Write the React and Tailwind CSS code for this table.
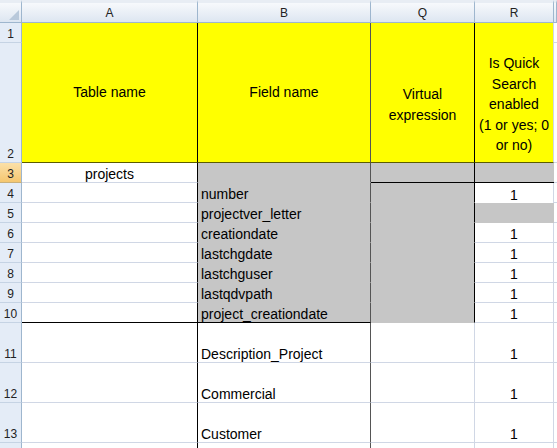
import React from "react";

const fields = [
  ["number", "1", false],
  ["projectver_letter", "", true],
  ["creationdate", "1", false],
  ["lastchgdate", "1", false],
  ["lastchguser", "1", false],
  ["lastqdvpath", "1", false],
  ["project_creationdate", "1", false],
];

const big = ["Description_Project", "Commercial", "Customer"];

function RowHead({ n, active }) {
  return (
    <div
      className={
        active
          ? "flex items-end justify-center text-[12px] leading-[14px] pb-[1px] text-[#222] bg-linear-to-b from-[#fbe0a8] to-[#f5c76f] border-r border-b border-r-[#9eb6ce] border-b-[#c9b07a]"
          : "flex items-end justify-center text-[12px] leading-[14px] pb-[1px] text-[#222] bg-[#e4ecf7] border-r border-b border-r-[#9eb6ce] border-b-[#c5d3e4]"
      }
    >
      {n}
    </div>
  );
}

function ColHead({ children }) {
  return (
    <div className="flex items-center justify-center text-[12px] text-[#222] bg-linear-to-b from-[#f7f9fc] to-[#dde6f1] border-r border-b border-[#9eb6ce] border-t-[3px] border-t-[#e8edf4]">
      {children}
    </div>
  );
}

export default function App() {
  return (
    <div className="w-[557px] h-[448px] overflow-hidden bg-white font-['Liberation_Sans',Arial,sans-serif] text-black text-[14px]">
      <div className="grid grid-cols-[22px_176px_173px_104px_79px_1fr] grid-rows-[23px_20px_120px_20px_20px_20px_20px_20px_20px_20px_20px_40px_40px_40px_20px]">
        {/* column header row */}
        <div className="relative bg-linear-to-b from-[#f7f9fc] to-[#dde6f1] border-r border-b border-[#9eb6ce] border-t-[3px] border-t-[#e8edf4]">
          <svg className="absolute right-[2px] bottom-[2px]" width="10" height="10" viewBox="0 0 10 10">
            <path d="M10 0 L10 10 L0 10 Z" fill="#b9c9db" />
          </svg>
        </div>
        <ColHead>A</ColHead>
        <ColHead>B</ColHead>
        <ColHead>Q</ColHead>
        <ColHead>R</ColHead>
        <ColHead>{""}</ColHead>

        {/* rows 1-2 */}
        <RowHead n="1" />
        <div className="row-span-2 flex items-center justify-center bg-[#ffff00] border-r border-b border-r-black border-b-[#5c5c00]">
          Table name
        </div>
        <div className="row-span-2 flex items-center justify-center bg-[#ffff00] border-r border-b border-r-[#555] border-b-[#5c5c00]">
          Field name
        </div>
        <div className="row-span-2 flex items-center justify-center pt-[24px] text-center leading-[20.5px] whitespace-nowrap bg-[#ffff00] border-r border-b border-r-black border-b-[#5c5c00]">
          <span>
            Virtual
            <br />
            expression
          </span>
        </div>
        <div className="row-span-2 flex items-center justify-center pt-[24px] text-center leading-[20.5px] whitespace-nowrap bg-[#ffff00] border-r border-b border-r-[#d0d7e5] border-b-[#5c5c00]">
          <span>
            Is Quick
            <br />
            Search
            <br />
            enabled
            <br />
            (1 or yes; 0
            <br />
            or no)
          </span>
        </div>
        <div className="border-b border-[#d0d7e5]" />
        <RowHead n="2" />
        <div className="border-b border-[#d0d7e5]" />

        {/* row 3 */}
        <RowHead n="3" active />
        <div className="flex items-end justify-center leading-[16px] border-r border-b border-r-black border-b-[#d0d7e5]">
          projects
        </div>
        <div className="bg-[#c6c6c6] border-r border-b border-r-[#555] border-b-[#c6c6c6]" />
        <div className="bg-[#c6c6c6] border-r border-b border-r-black border-b-black" />
        <div className="bg-[#c6c6c6] border-b border-b-black" />
        <div className="border-b border-[#d0d7e5]" />

        {/* rows 4-10 */}
        {fields.map(([name, val, grayR], i) => {
          const last = i === fields.length - 1;
          return (
            <React.Fragment key={name}>
              <RowHead n={String(i + 4)} />
              <div
                className={
                  last
                    ? "border-r border-b border-r-black border-b-black"
                    : "border-r border-b border-r-black border-b-[#d0d7e5]"
                }
              />
              <div
                className={
                  last
                    ? "flex items-end pl-[3px] leading-[16px] whitespace-nowrap bg-[#c6c6c6] border-r border-b border-r-[#555] border-b-black"
                    : "flex items-end pl-[3px] leading-[16px] whitespace-nowrap bg-[#c6c6c6] border-r border-b border-r-[#555] border-b-[#c6c6c6]"
                }
              >
                {name}
              </div>
              <div className="bg-[#c6c6c6] border-r border-b border-r-black border-b-[#c6c6c6]" />
              {grayR ? (
                <div className="bg-[#c6c6c6] border-b border-b-[#c6c6c6]" />
              ) : (
                <div
                  className={
                    i === 0
                      ? "flex items-end justify-center leading-[16px] border-r border-r-[#d0d7e5]"
                      : "flex items-end justify-center leading-[16px] border-r border-b border-[#d0d7e5]"
                  }
                >
                  {val}
                </div>
              )}
              <div className="border-b border-[#d0d7e5]" />
            </React.Fragment>
          );
        })}

        {/* rows 11-13 */}
        {big.map((name, i) => (
          <React.Fragment key={name}>
            <RowHead n={String(i + 11)} />
            <div className="border-r border-b border-r-black border-b-[#d0d7e5]" />
            <div className="flex items-end pl-[3px] leading-[16px] whitespace-nowrap border-r border-b border-r-[#555] border-b-[#d0d7e5]">
              {name}
            </div>
            <div className="border-r border-b border-[#d0d7e5]" />
            <div className="flex items-end justify-center leading-[16px] border-r border-b border-[#d0d7e5]">
              1
            </div>
            <div className="border-b border-[#d0d7e5]" />
          </React.Fragment>
        ))}

        {/* row 14 partial */}
        <RowHead n="" />
        <div className="border-r border-b border-r-black border-b-[#d0d7e5]" />
        <div className="border-r border-b border-r-[#555] border-b-[#d0d7e5]" />
        <div className="border-r border-b border-[#d0d7e5]" />
        <div className="border-r border-b border-[#d0d7e5]" />
        <div className="border-b border-[#d0d7e5]" />
      </div>
    </div>
  );
}
